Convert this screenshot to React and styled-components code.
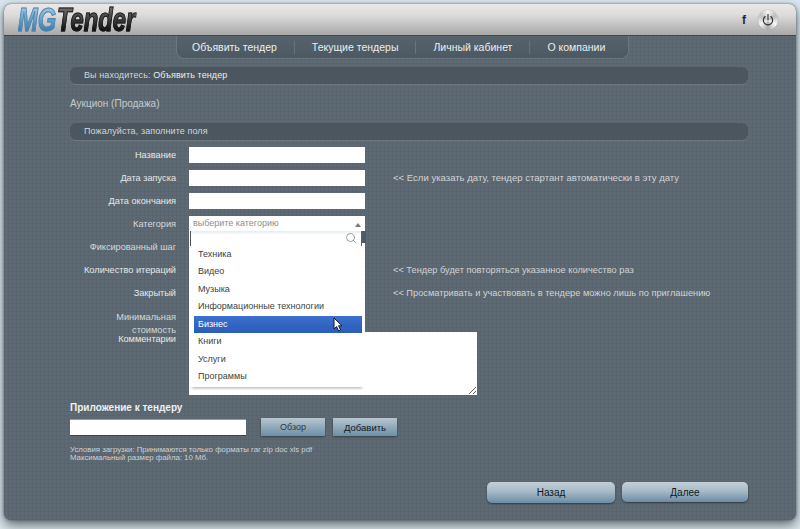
import React from 'react'
import styled, { createGlobalStyle } from 'styled-components'
import { Search } from 'lucide-react'

const GlobalStyle = createGlobalStyle`
  html, body {
    margin: 0;
    height: 100%;
    overflow: hidden;
    background: #dbe7ee;
    font-family: "Liberation Sans", Arial, sans-serif;
  }
`

const Panel = styled.div`
  box-sizing: border-box;
  width: 792px;
  height: 516px;
  margin: 4px;
  border-radius: 7px;
  display: flex;
  flex-direction: column;
  box-shadow: 0 5px 12px rgba(30, 40, 45, 0.65), 0 0 3px rgba(40, 60, 70, 0.6);
  background-color: #5d6973;
  background-image:
    repeating-linear-gradient(90deg, rgba(0, 0, 0, 0.035) 0 1px, transparent 1px 4px),
    repeating-linear-gradient(0deg, rgba(0, 0, 0, 0.035) 0 1px, transparent 1px 4px);
`

const Header = styled.header`
  flex: none;
  height: 32px;
  box-sizing: border-box;
  padding: 0 18px 0 14px;
  display: flex;
  align-items: center;
  justify-content: space-between;
  border-radius: 7px 7px 0 0;
  background: linear-gradient(#e9e7e7 0%, #dddbdb 35%, #a8a8a8 100%);
  border-bottom: 1px solid #3f4950;
`

const Logo = styled.div`
  font-size: 30px;
  font-weight: 700;
  font-style: italic;
  display: flex;
  transform: scale(0.79, 1.08);
  transform-origin: left center;
`

const LogoPart = styled.span`
  background: ${p => p.$gradient};
  -webkit-background-clip: text;
  background-clip: text;
  color: transparent;
  -webkit-text-stroke: 1px ${p => p.$stroke};
  padding-right: 1px;
`

const HeaderTools = styled.div`
  display: flex;
  align-items: center;
  gap: 12px;
`

const Social = styled.span`
  font-size: 12px;
  font-weight: 700;
  color: #26292c;
`

const PowerButton = styled.div`
  width: 20px;
  height: 20px;
  border-radius: 50%;
  display: flex;
  align-items: center;
  justify-content: center;
  background: conic-gradient(#f4f4f4, #bbb, #f8f8f8, #aaa, #f4f4f4, #c0c0c0, #f4f4f4);
  box-shadow: 0 0 1px #777;
`

const Nav = styled.nav`
  flex: none;
  align-self: flex-start;
  margin-left: 172px;
  height: 23px;
  display: flex;
  align-items: center;
  box-sizing: border-box;
  background: linear-gradient(#56626c, #4d5962);
  border: 1px solid #6a7781;
  border-top: none;
  border-radius: 0 0 8px 8px;
`

const NavItem = styled.a`
  height: 13px;
  line-height: 13px;
  padding: 0 ${p => (p.$last ? 23 : 17)}px 0 ${p => (p.$first ? 15 : 17)}px;
  font-size: 10.5px;
  color: #eceeef;
  border-right: ${p => (p.$last ? 'none' : '1px solid #66727c')};
`

const Content = styled.main`
  flex: 1;
  display: flex;
  flex-direction: column;
  padding: 8px 48px 17px 66px;
  min-height: 0;
`

const Bar = styled.div`
  height: 17px;
  line-height: 17px;
  flex: none;
  padding-left: 14px;
  font-size: 9px;
  letter-spacing: 0.1px;
  color: #d3d7da;
  border-radius: 6px;
  background: #4b565e;
  box-shadow: 0 1px 0 rgba(255, 255, 255, 0.1);
`

const Crumb = styled.span`
  color: #edeff0;
`

const PageTitle = styled.h1`
  margin: 14px 0 13px;
  font-size: 10px;
  line-height: 12px;
  font-weight: 400;
  color: #c6cbce;
`

const Form = styled.form`
  margin: 3px 0 0;
  display: flex;
  flex-direction: column;
`

const Row = styled.div`
  display: grid;
  grid-template-columns: 106px 176px auto;
  column-gap: 13px;
  align-items: ${p => (p.$top ? 'start' : 'center')};
  height: ${p => p.$height || 23}px;
  font-size: 9.2px;
`

const Label = styled.label`
  text-align: right;
  line-height: 13px;
  padding-top: ${p => p.$offset ?? 2}px;
  color: ${p => (p.$dim ? '#d5d9dc' : '#e6e9ea')};
`

const Input = styled.input`
  box-sizing: border-box;
  display: block;
  width: 176px;
  height: 16px;
  padding: 0 3px;
  border: none;
  background: #fff;
`

const SelectWrap = styled.div`
  position: relative;
  width: 176px;
  height: 16px;
`

const SelectValue = styled.div`
  box-sizing: border-box;
  height: 16px;
  line-height: 14px;
  padding: 0 4px;
  font-size: 9px;
  color: #8b8f92;
  background: #fff;
`

const Caret = styled.span`
  position: absolute;
  right: 4px;
  top: 7px;
  border-left: 3px solid transparent;
  border-right: 3px solid transparent;
  border-bottom: 4px solid #777;
`

const Dropdown = styled.div`
  position: absolute;
  z-index: 2;
  top: 15px;
  left: 0;
  width: 176px;
  height: 156px;
  background: #fff;
  box-shadow: 0 4px 3px -3px rgba(0, 0, 0, 0.35);
`

const SearchBox = styled.div`
  box-sizing: border-box;
  position: relative;
  width: 172px;
  margin-left: 1px;
  height: 15px;
  background: linear-gradient(#e4edf2, #fff 4px);
  border-left: 1px solid #4a555d;
  border-right: 1px solid #55616b;
  display: flex;
  align-items: center;
  justify-content: flex-end;
  padding-right: 4px;
  color: #777;
`

const SearchNotch = styled.span`
  position: absolute;
  right: -5px;
  top: 0;
  width: 4px;
  height: 12px;
  background: #4f5b64;
`

const Options = styled.ul`
  list-style: none;
  margin: 0;
  padding: 0 3px 0 5px;
`

const Option = styled.li`
  height: 17.55px;
  line-height: 17.5px;
  padding-left: 4px;
  font-size: 9px;
  color: ${p => (p.$active ? '#fff' : '#3b3f42')};
  background: ${p => (p.$active ? 'linear-gradient(#3b70cf, #2a5cb8)' : 'transparent')};
  position: relative;
`

const Pointer = styled.svg`
  position: absolute;
  left: 139px;
  top: 1px;
`

const Hint = styled.span`
  padding-left: 15px;
  font-size: ${p => p.$size || 9.25}px;
  color: #d0d4d7;
  white-space: nowrap;
`

const Comments = styled.textarea`
  box-sizing: border-box;
  display: block;
  width: 288px;
  height: 63px;
  border: none;
  background: #fff;
  resize: both;
`

const SectionHead = styled.h2`
  margin: 6px 0 4px;
  font-size: 10px;
  line-height: 13px;
  font-weight: 700;
  color: #eef0f1;
`

const UploadRow = styled.div`
  display: flex;
  align-items: center;
  gap: 8px;
  height: 18px;
`

const FileInput = styled.input`
  box-sizing: border-box;
  width: 176px;
  height: 17px;
  margin-right: 7px;
  border: none;
  border-top: 1px solid #7f9fb3;
  border-bottom: 1px solid #3a434a;
  background: #fff;
`

const SmallButton = styled.button`
  width: 64px;
  height: 18px;
  padding: 0;
  border: none;
  font: ${p => (p.$muted ? 9 : 9.5)}px "Liberation Sans", Arial, sans-serif;
  color: ${p => (p.$muted ? '#2f3a42' : '#10181e')};
  background: linear-gradient(#b7c6d0, #6e8ea6);
  box-shadow: 0 1px 2px rgba(0, 0, 0, 0.4);
`

const Notes = styled.p`
  margin: 10px 0 0;
  font-size: 7.8px;
  line-height: 8px;
  color: #ced2d5;
`

const Footer = styled.div`
  margin-top: auto;
  display: flex;
  justify-content: flex-end;
  gap: 7px;
`

const NavButton = styled.button`
  width: ${p => p.$width}px;
  height: ${p => p.$height}px;
  padding: 0;
  border: none;
  border-radius: 5px;
  font: 10px "Liberation Sans", Arial, sans-serif;
  color: #10181e;
  background: linear-gradient(#c4d0d8, #a7bac7 45%, #6b8ca6);
  box-shadow: 0 1px 2px rgba(0, 0, 0, 0.45);
`

const categories = ['Техника', 'Видео', 'Музыка', 'Информационные технологии', 'Бизнес', 'Книги', 'Услуги', 'Программы']

const App = () => {
  return (
    <>
      <GlobalStyle />
      <Panel>
        <Header>
          <Logo>
            <LogoPart $gradient="linear-gradient(#9cc3dc 20%, #3d7aa8 80%)" $stroke="#4f88b2">MG</LogoPart>
            <LogoPart $gradient="linear-gradient(#6a6a6a 20%, #0c0c0c 80%)" $stroke="#1c1c1c">Tender</LogoPart>
          </Logo>
          <HeaderTools>
            <Social>f</Social>
            <PowerButton>
              <svg width="14" height="14" viewBox="0 0 14 14" fill="none" stroke="#333" strokeWidth="1.2" strokeLinecap="round">
                <path d="M7 1.5v5.2" />
                <path d="M4.2 3.6a4.6 4.6 0 1 0 5.6 0" />
              </svg>
            </PowerButton>
          </HeaderTools>
        </Header>

        <Nav>
          <NavItem $first>Объявить тендер</NavItem>
          <NavItem>Текущие тендеры</NavItem>
          <NavItem>Личный кабинет</NavItem>
          <NavItem $last>О компании</NavItem>
        </Nav>

        <Content>
          <Bar>Вы находитесь: <Crumb>Объявить тендер</Crumb></Bar>
          <PageTitle>Аукцион (Продажа)</PageTitle>
          <Bar>Пожалуйста, заполните поля</Bar>

          <Form>
            <Row>
              <Label>Название</Label>
              <Input />
            </Row>
            <Row>
              <Label>Дата запуска</Label>
              <Input />
              <Hint $size={9.55}>&lt;&lt; Если указать дату, тендер стартант автоматически в эту дату</Hint>
            </Row>
            <Row>
              <Label>Дата окончания</Label>
              <Input />
            </Row>
            <Row>
              <Label $dim>Категория</Label>
              <SelectWrap>
                <SelectValue>выберите категорию</SelectValue>
                <Caret />
                <Dropdown>
                  <SearchBox>
                    <Search size={12} strokeWidth={1.4} />
                    <SearchNotch />
                  </SearchBox>
                  <Options>
                    {categories.map(name => (
                      <Option key={name} $active={name === 'Бизнес'}>
                        {name}
                        {name === 'Бизнес' && (
                          <Pointer width="11" height="15" viewBox="0 0 11 15">
                            <path d="M1 1v11l2.6-2.4L5.6 14l2-1-2-4.2H9z" fill="#fff" stroke="#0d1a2e" strokeWidth="1" />
                          </Pointer>
                        )}
                      </Option>
                    ))}
                  </Options>
                </Dropdown>
              </SelectWrap>
            </Row>
            <Row>
              <Label $dim>Фиксированный шаг</Label>
            </Row>
            <Row>
              <Label>Количество итераций</Label>
              <span />
              <Hint>&lt;&lt; Тендер будет повторяться указанное количество раз</Hint>
            </Row>
            <Row>
              <Label>Закрытый</Label>
              <span />
              <Hint>&lt;&lt; Просматривать и участвовать в тендере можно лишь по приглашению</Hint>
            </Row>
            <Row $top $height={28}>
              <Label $dim $offset={7}>Минимальная<br />стоимость</Label>
            </Row>
            <Row $top $height={63}>
              <Label $offset={1}>Комментарии</Label>
              <Comments />
            </Row>
          </Form>

          <SectionHead>Приложение к тендеру</SectionHead>
          <UploadRow>
            <FileInput />
            <SmallButton $muted>Обзор</SmallButton>
            <SmallButton>Добавить</SmallButton>
          </UploadRow>
          <Notes>
            Условия загрузки: Принимаются только форматы rar zip doc xls pdf<br />
            Максимальный размер файла: 10 Мб.
          </Notes>

          <Footer>
            <NavButton $width={128} $height={21}>Назад</NavButton>
            <NavButton $width={126} $height={20}>Далее</NavButton>
          </Footer>
        </Content>
      </Panel>
    </>
  )
}

export default App
